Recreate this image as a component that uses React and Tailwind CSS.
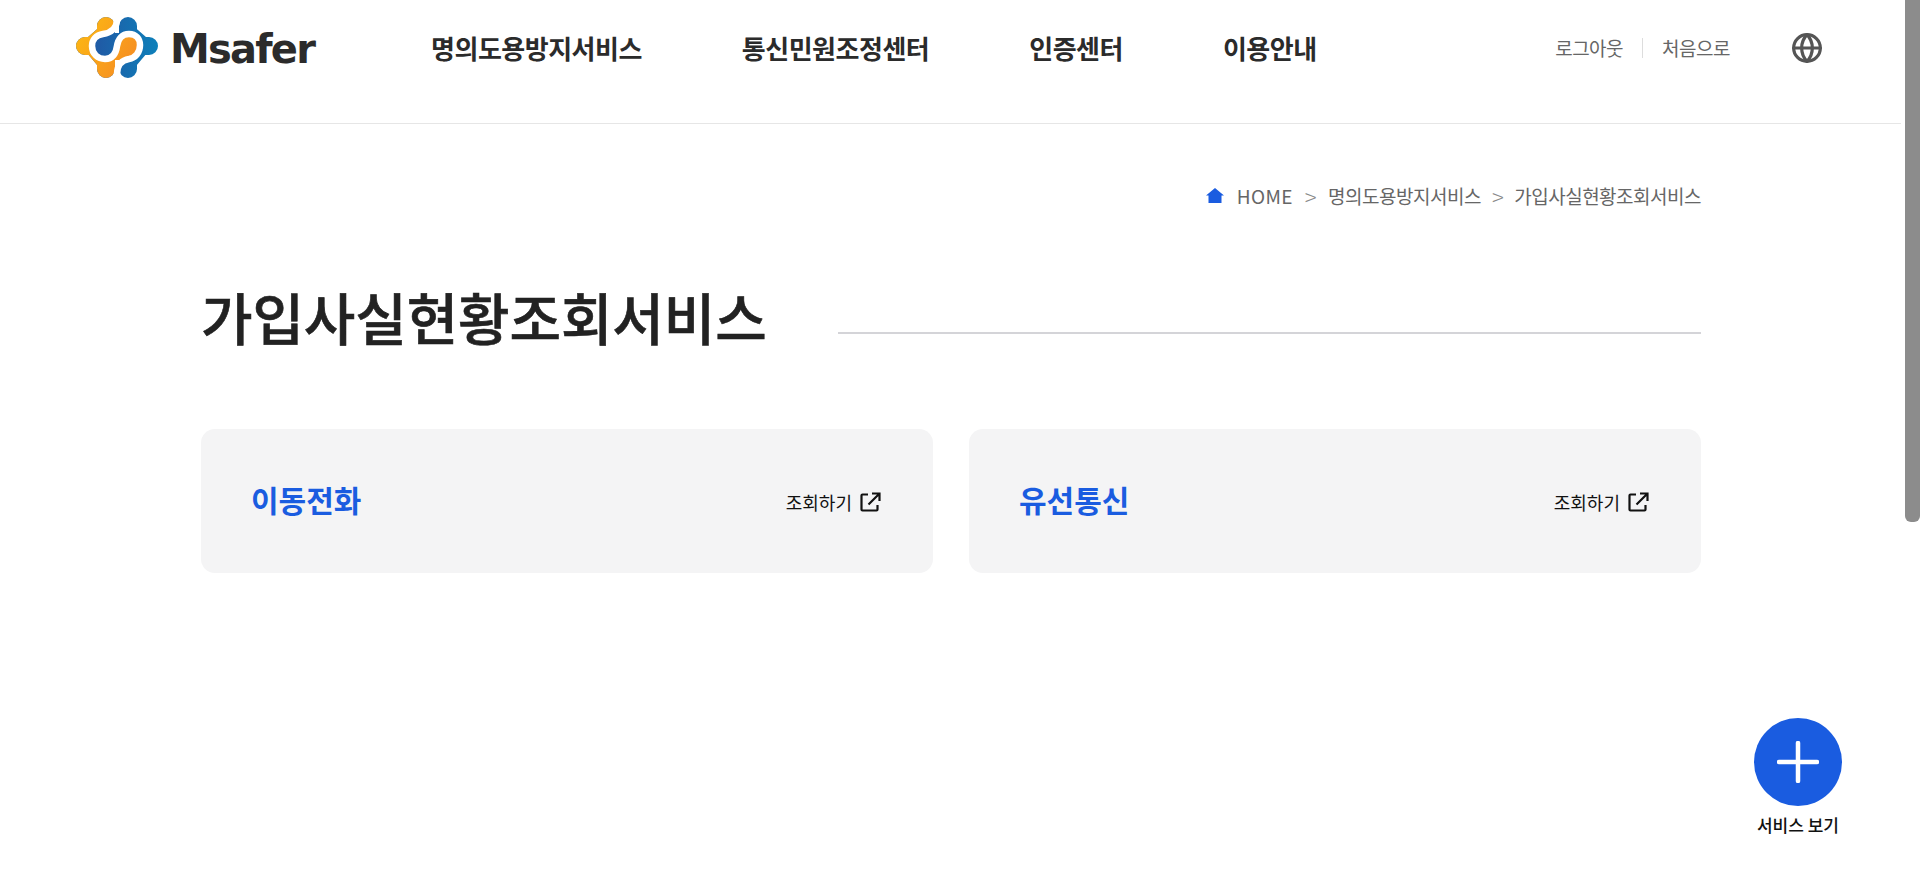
import { Globe } from "lucide-react";

const font = { fontFamily: '"Noto Sans CJK KR", "Noto Sans", sans-serif' };

// the white S splits the plus shape: left of it orange, right of it blue
const sCurve =
  "M47 0 L47 11 C47 20 41 25 33 26 C26 27 22 32 22 38 C22 46 28 51 35 51 C42 51 46 46 47 38 C48 31 52 26 59 26 C66 26 70 31 70 37 C70 45 65 50 59 51 C52 52 47 57 47 66 L47 80";

function LogoMark() {
  const plus = (
    <g strokeWidth="18" strokeLinecap="round" strokeLinejoin="round">
      <path d="M36 18 L36 61 M58 18 L58 61 M15 38 L79 38" />
      <path d="M34 23 L18 37 L34 56 M60 23 L76 37 L60 56" strokeWidth="12" />
      <path d="M32 31 H62 V46 H32Z" strokeWidth="12" />
    </g>
  );
  return (
    <svg width="100" height="80" viewBox="0 0 100 80" fill="none" className="shrink-0">
      <defs>
        <linearGradient id="org" gradientUnits="userSpaceOnUse" x1="6" y1="20" x2="68" y2="60">
          <stop offset="0" stopColor="#fdb813" />
          <stop offset="1" stopColor="#f58a24" />
        </linearGradient>
        <linearGradient id="blu" gradientUnits="userSpaceOnUse" x1="30" y1="40" x2="88" y2="40">
          <stop offset="0" stopColor="#1f5ca6" />
          <stop offset="1" stopColor="#0d80ba" />
        </linearGradient>
        <clipPath id="leftOfS">
          <path d={sCurve + " L0 80 L0 0 Z"} />
        </clipPath>
      </defs>
      <g stroke="url(#blu)">{plus}</g>
      <g stroke="url(#org)" clipPath="url(#leftOfS)">{plus}</g>
      <path d={sCurve} stroke="#fff" strokeWidth="6.500" />
    </svg>
  );
}

function ExternalIcon() {
  return (
    <svg width="21" height="21" viewBox="0 0 21 21" fill="none" stroke="#111" strokeWidth="2.200" className="shrink-0">
      <path d="M8 2.500H2.500a1 1 0 0 0-1 1v14a1 1 0 0 0 1 1h14a1 1 0 0 0 1-1V13" />
      <path d="M8.500 12.500 19 2M12 1.500H19.500V9" />
    </svg>
  );
}

function Card({ title }) {
  return (
    <div className="flex-1 h-[144px] rounded-[14px] bg-[#f4f4f5] pl-[50px] pr-[52px] pb-[2px] flex items-center justify-between">
      <span className="text-[30px] font-bold text-[#1a5ce0]">{title}</span>
      <span className="mt-[5px] flex items-center gap-[8px] text-[18px] text-[#111]">
        조회하기
        <ExternalIcon />
      </span>
    </div>
  );
}

export default function App() {
  return (
    <div style={font} className="relative h-[870px] w-full overflow-hidden bg-white">
      {/* header */}
      <header className="mr-[19px] h-[124px] border-b border-[#e6e6e6] pl-[70px] pr-[78px] pb-[27px] flex items-center">
        <LogoMark />
        <span style={{ fontFamily: '"DejaVu Sans", sans-serif' }} className="mt-[2px] text-[40px] font-bold leading-none tracking-[-1.8px] text-[#2b2b2b]">Msafer</span>
        <nav className="ml-[117px] mb-[2px] flex gap-[100px] text-[26px] font-bold tracking-[-0.5px] text-[#2b2b2b]">
          <a>명의도용방지서비스</a>
          <a>통신민원조정센터</a>
          <a>인증센터</a>
          <a>이용안내</a>
        </nav>
        <div className="ml-auto flex items-center text-[19px] text-[#666] tracking-[-0.5px]">
          <a>로그아웃</a>
          <span className="mx-[19px] h-[20px] w-px bg-[#ddd]" />
          <a>처음으로</a>
          <Globe size={32} strokeWidth={2.4} className="ml-[61px] text-[#555]" />
        </div>
      </header>

      <main className="ml-[201px] w-[1500px]">
        {/* breadcrumb */}
        <div className="mt-[58px] flex items-center justify-end text-[19px] text-[#666] tracking-[-0.5px]">
          <svg width="18" height="16" viewBox="0 0 18 16" className="mr-[13px]">
            <path d="M9 0 18 7.500H15.500V15H2.500V7.500H0Z" fill="#1a5ce0" />
          </svg>
          <span className="tracking-[0.4px]">HOME</span>
          <span className="mx-[12px] text-[22px] leading-none font-light text-[#888]">&gt;</span>
          <span>명의도용방지서비스</span>
          <span className="mx-[11px] text-[22px] leading-none font-light text-[#888]">&gt;</span>
          <span>가입사실현황조회서비스</span>
        </div>

        {/* title */}
        <div className="mt-[65px] flex items-end">
          <h1 className="text-[56px] leading-[80px] font-medium tracking-[-0.1px] text-[#222] [-webkit-text-stroke:0.6px_#222]">가입사실현황조회서비스</h1>
          <div className="ml-[71px] mb-[22px] h-[2px] flex-1 bg-[#d4d4d8]" />
        </div>

        {/* cards */}
        <div className="mt-[73px] flex gap-[36px]">
          <Card title="이동전화" />
          <Card title="유선통신" />
        </div>
      </main>

      {/* floating button */}
      <div className="absolute left-[1754px] top-[718px] flex w-[88px] flex-col items-center">
        <div className="flex h-[88px] w-[88px] items-center justify-center rounded-full bg-[#1a5ce0]">
          <svg width="42" height="42" viewBox="0 0 42 42" stroke="#fff" strokeWidth="4.500" strokeLinecap="round">
            <path d="M21 2V40M2 21H40" />
          </svg>
        </div>
        <span className="mt-[6px] whitespace-nowrap text-[17px] font-medium text-[#111]">서비스 보기</span>
      </div>

      {/* scrollbar thumb */}
      <div className="absolute right-0 top-0 h-[522px] w-[15px] rounded-b-[6px] bg-[#8c8c8c]" />
    </div>
  );
}
